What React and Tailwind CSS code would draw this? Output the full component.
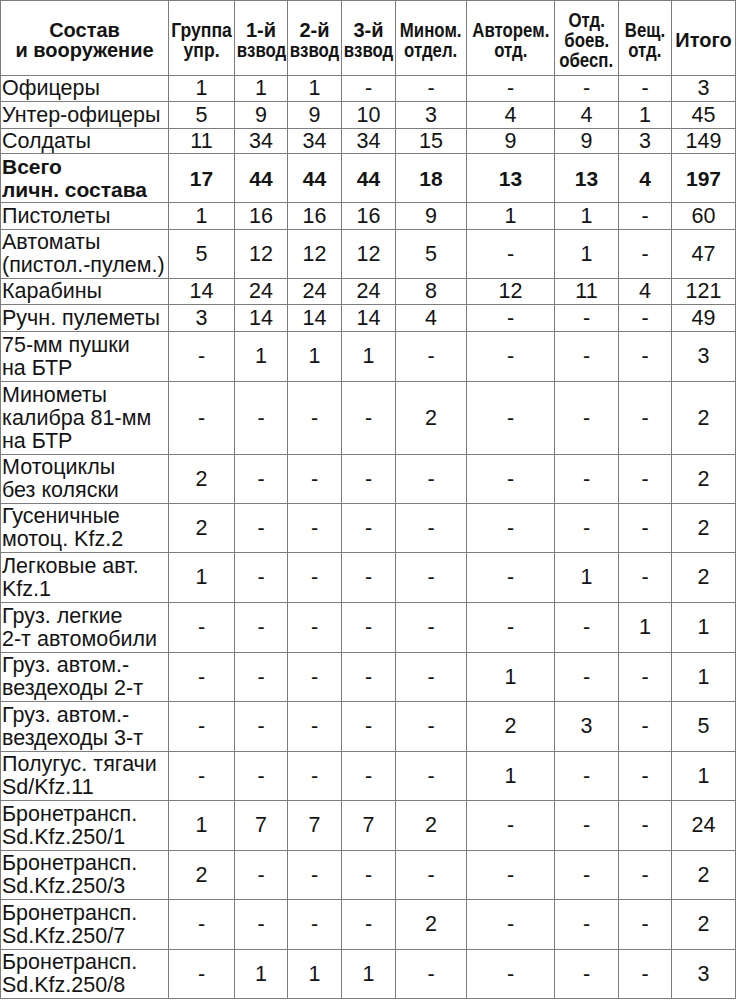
import React from "react";

const H = {
  25: "h-[25px]",
  26: "h-[26px]",
  27: "h-[27px]",
  49: "h-[49px]",
  50: "h-[50px]",
  73: "h-[73px]",
};

const rows = [
  { l: ["Офицеры"], h: 26, v: ["1", "1", "1", "-", "-", "-", "-", "-", "3"] },
  { l: ["Унтер-офицеры"], h: 27, v: ["5", "9", "9", "10", "3", "4", "4", "1", "45"] },
  { l: ["Солдаты"], h: 25, v: ["11", "34", "34", "34", "15", "9", "9", "3", "149"] },
  { l: ["Всего", "личн. состава"], h: 49, b: true, v: ["17", "44", "44", "44", "18", "13", "13", "4", "197"] },
  { l: ["Пистолеты"], h: 27, v: ["1", "16", "16", "16", "9", "1", "1", "-", "60"] },
  { l: ["Автоматы", "(пистол.-пулем.)"], h: 49, v: ["5", "12", "12", "12", "5", "-", "1", "-", "47"] },
  { l: ["Карабины"], h: 26, v: ["14", "24", "24", "24", "8", "12", "11", "4", "121"] },
  { l: ["Ручн. пулеметы"], h: 27, v: ["3", "14", "14", "14", "4", "-", "-", "-", "49"] },
  { l: ["75-мм пушки", "на БТР"], h: 50, v: ["-", "1", "1", "1", "-", "-", "-", "-", "3"] },
  { l: ["Минометы", "калибра 81-мм", "на БТР"], h: 73, v: ["-", "-", "-", "-", "2", "-", "-", "-", "2"] },
  { l: ["Мотоциклы", "без коляски"], h: 49, v: ["2", "-", "-", "-", "-", "-", "-", "-", "2"] },
  { l: ["Гусеничные", "мотоц. Kfz.2"], h: 49, v: ["2", "-", "-", "-", "-", "-", "-", "-", "2"] },
  { l: ["Легковые авт.", "Kfz.1"], h: 50, v: ["1", "-", "-", "-", "-", "-", "1", "-", "2"] },
  { l: ["Груз. легкие", "2-т автомобили"], h: 50, v: ["-", "-", "-", "-", "-", "-", "-", "1", "1"] },
  { l: ["Груз. автом.-", "вездеходы 2-т"], h: 49, v: ["-", "-", "-", "-", "-", "1", "-", "-", "1"] },
  { l: ["Груз. автом.-", "вездеходы 3-т"], h: 50, v: ["-", "-", "-", "-", "-", "2", "3", "-", "5"] },
  { l: ["Полугус. тягачи", "Sd/Kfz.11"], h: 49, v: ["-", "-", "-", "-", "-", "1", "-", "-", "1"] },
  { l: ["Бронетрансп.", "Sd.Kfz.250/1"], h: 50, v: ["1", "7", "7", "7", "2", "-", "-", "-", "24"] },
  { l: ["Бронетрансп.", "Sd.Kfz.250/3"], h: 49, v: ["2", "-", "-", "-", "-", "-", "-", "-", "2"] },
  { l: ["Бронетрансп.", "Sd.Kfz.250/7"], h: 50, v: ["-", "-", "-", "-", "2", "-", "-", "-", "2"] },
  { l: ["Бронетрансп.", "Sd.Kfz.250/8"], h: 49, v: ["-", "1", "1", "1", "-", "-", "-", "-", "3"] },
];

function N({ children }) {
  return <span className="inline-block whitespace-nowrap scale-x-[0.84]">{children}</span>;
}
function G({ children }) {
  return <span className="inline-block whitespace-nowrap scale-x-[0.88]">{children}</span>;
}
function W({ children }) {
  return <span className="inline-block whitespace-nowrap">{children}</span>;
}

const headers = [
  [<W key="a">Состав</W>, <W key="b">и вооружение</W>],
  [<G key="a">Группа</G>, <G key="b">упр.</G>],
  [<W key="a">1-й</W>, <N key="b">взвод</N>],
  [<W key="a">2-й</W>, <N key="b">взвод</N>],
  [<W key="a">3-й</W>, <N key="b">взвод</N>],
  [<N key="a">Мином.</N>, <N key="b">отдел.</N>],
  [<N key="a">Авторем.</N>, <N key="b">отд.</N>],
  [<N key="a">Отд.</N>, <N key="b">боев.</N>, <N key="c">обесп.</N>],
  [<N key="a">Вещ.</N>, <N key="b">отд.</N>],
  [<W key="a">Итого</W>],
];

const cell = "border border-[#7d7d7d] p-0 align-middle";

export default function App() {
  return (
    <div className="bg-white w-[737px] h-[1000px] overflow-hidden" style={{ fontFamily: "'Liberation Sans', Arial, sans-serif" }}>
      <table className="table-fixed border-collapse w-[736px] text-[#141414] text-[21.5px] leading-[23px]">
        <colgroup>
          <col className="w-[168px]" />
          <col className="w-[66px]" />
          <col className="w-[53px]" />
          <col className="w-[54px]" />
          <col className="w-[54px]" />
          <col className="w-[71px]" />
          <col className="w-[88px]" />
          <col className="w-[64px]" />
          <col className="w-[53px]" />
          <col className="w-[64px]" />
        </colgroup>
        <thead>
          <tr className="h-[75px]">
            {headers.map((hd, i) => (
              <th key={i} className={cell + " font-bold text-[20px]"}>
                <div className="flex flex-col items-center leading-[20px] pt-[3px]">{hd}</div>
              </th>
            ))}
          </tr>
        </thead>
        <tbody>
          {rows.map((r, i) => (
            <tr key={i} className={H[r.h]}>
              <td className={cell + " pl-[1px] text-left whitespace-nowrap " + (r.b ? "font-bold text-[21px]" : "")}>
                {r.l.map((t, k) => (
                  <div key={k}>{t}</div>
                ))}
              </td>
              {r.v.map((x, k) => (
                <td key={k} className={cell + " text-center " + (r.b ? "font-bold text-[21px]" : "")}>
                  {x}
                </td>
              ))}
            </tr>
          ))}
        </tbody>
      </table>
    </div>
  );
}
